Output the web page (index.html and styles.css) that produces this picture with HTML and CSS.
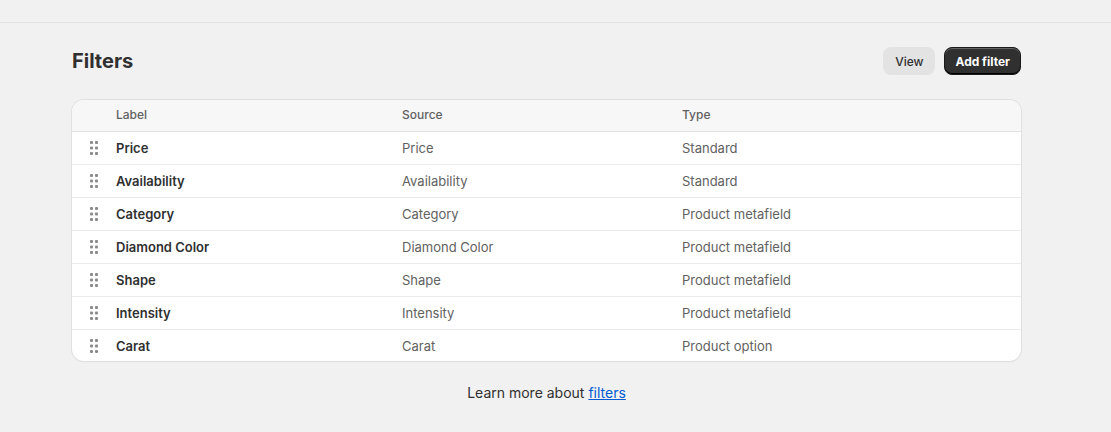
FILE: index.html
```html
<!DOCTYPE html>
<html lang="en">
<head>
    <meta charset="UTF-8">
    <meta name="viewport" content="width=device-width, initial-scale=1.0">
    <title>Filters</title>
    <link rel="stylesheet" href="styles.css">
</head>
<body>
    <div class="topbar"></div>
    <div class="page">
        <header class="page-header">
            <h1>Filters</h1>
            <div class="actions">
                <button class="btn btn-plain">View</button>
                <button class="btn btn-primary">Add filter</button>
            </div>
        </header>
        <div class="card">
            <table class="filters">
                <thead>
                    <tr>
                        <th class="handle-col"></th>
                        <th class="label-col">Label</th>
                        <th class="source-col">Source</th>
                        <th>Type</th>
                    </tr>
                </thead>
                <tbody id="filter-rows"></tbody>
            </table>
        </div>
        <p class="learn">Learn more about <a href="#">filters</a></p>
    </div>
    <script>
        const filters = [
            ["Price", "Price", "Standard"],
            ["Availability", "Availability", "Standard"],
            ["Category", "Category", "Product metafield"],
            ["Diamond Color", "Diamond Color", "Product metafield"],
            ["Shape", "Shape", "Product metafield"],
            ["Intensity", "Intensity", "Product metafield"],
            ["Carat", "Carat", "Product option"]
        ];

        const handle = `<svg width="8" height="14" viewBox="0 0 8 14"><g fill="#8a8a8a">
            <rect x="0" y="0" width="3" height="3" rx="1"/><rect x="5" y="0" width="3" height="3" rx="1"/>
            <rect x="0" y="5.5" width="3" height="3" rx="1"/><rect x="5" y="5.5" width="3" height="3" rx="1"/>
            <rect x="0" y="11" width="3" height="3" rx="1"/><rect x="5" y="11" width="3" height="3" rx="1"/>
        </g></svg>`;

        let tbody = document.getElementById("filter-rows");
        filters.forEach(f => {
            let tr = document.createElement("tr");
            tr.innerHTML = `<td class="handle-col">${handle}</td><td class="name">${f[0]}</td><td>${f[1]}</td><td>${f[2]}</td>`;
            tbody.appendChild(tr);
        });
    </script>
</body>
</html>
```

FILE: styles.css
```css
* {
    margin: 0;
    padding: 0;
    box-sizing: border-box;
}
body {
    background: #f1f1f1;
    font-family: Inter, "Noto Sans", sans-serif;
    color: #303030;
    font-size: 13px;
}
.topbar {
    height: 23px;
    border-bottom: 1px solid #e3e3e3;
}
.page {
    width: 949px;
    padding-top: 24px;
    margin-left: 72px;
}
.page-header {
    display: flex;
    justify-content: space-between;
    align-items: center;
    height: 28px;
    margin-bottom: 25px;
}
.page-header h1 {
    font-size: 20px;
    font-weight: 700;
    color: #303030;
}
.actions {
    display: flex;
    gap: 9px;
}
.btn {
    font-family: Inter, "Noto Sans", sans-serif;
    font-size: 12px;
    height: 28px;
    padding: 0 12px;
    border-radius: 8px;
    border: none;
    cursor: pointer;
}
.btn-plain {
    background: #e3e3e3;
    color: #303030;
    font-weight: 500;
}
.btn-primary {
    background: #303030;
    color: #fff;
    font-weight: 700;
    padding: 0 10px;
    border: 1px solid #1a1a1a;
    box-shadow: inset 0 -1px 0 #000, inset 0 1px 0 rgba(255,255,255,0.25);
}
.card {
    background: #fff;
    border-radius: 12px;
    overflow: hidden;
    box-shadow: 0 0 0 1px #e0e0e0, 0 1px 1px rgba(0,0,0,0.12);
}
.filters {
    width: 100%;
    border-collapse: collapse;
}
.filters th {
    background: #f7f7f7;
    color: #616161;
    font-weight: 500;
    font-size: 12px;
    text-align: left;
    height: 31px;
    padding-bottom: 2px;
    border-bottom: 1px solid #e3e3e3;
}
.filters td {
    height: 33px;
    color: #616161;
    border-bottom: 1px solid #ebebeb;
}
.filters tbody tr:last-child td {
    border-bottom: none;
    height: 32px;
    padding-top: 2px;
}
.filters td.name {
    color: #303030;
    font-weight: 600;
}
.handle-col {
    width: 44px;
    padding-left: 18px;
}
.handle-col svg {
    display: block;
}
.label-col {
    width: 286px;
}
.source-col {
    width: 280px;
}
.learn {
    text-align: center;
    margin-top: 23px;
    font-size: 14px;
    color: #303030;
}
.learn a {
    color: #005bd3;
}
```
